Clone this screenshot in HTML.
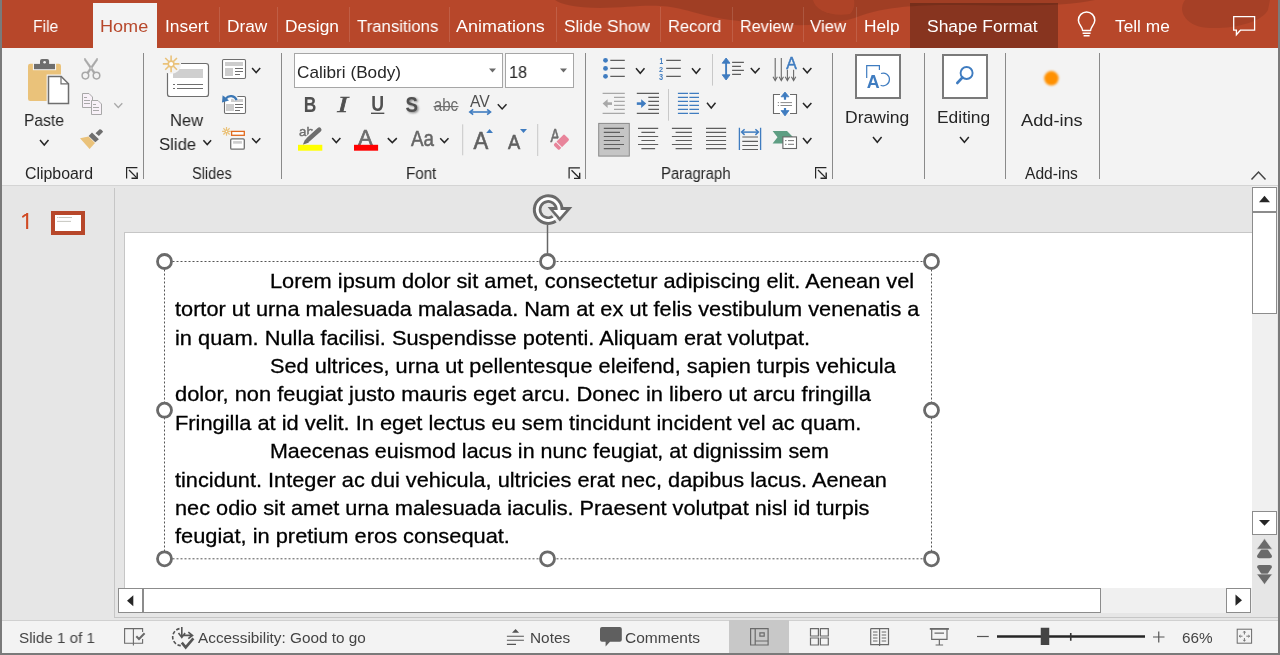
<!DOCTYPE html><html><head><meta charset="utf-8"><style>
html,body{margin:0;padding:0;width:1280px;height:655px;overflow:hidden;background:#e6e6e6}
body{position:relative;font-family:"Liberation Sans",sans-serif}
.t{position:absolute;white-space:nowrap;will-change:transform}
svg{overflow:visible}
</style></head><body>
<div style="position:absolute;left:0px;top:0px;width:1280px;height:48px;background:#b7472a"></div>
<svg style="position:absolute;left:0px;top:0px" width="1280" height="48" viewBox="0 0 1280 48">
<path d="M555 0 C560 4 575 8 600 8 C625 8 640 5 660 6 C680 7 690 12 700 14 C720 20 760 24 790 25 C820 26 845 22 860 16 C880 9 900 6 940 5 C1000 5 1060 8 1095 0 Z" fill="rgba(0,0,0,0.12)"/>
<path d="M813 0 C815 10 830 17 850 14 C856 8 854 0 854 0 Z" fill="rgba(183,71,42,0.6)"/>
<path d="M1185 0 C1176 12 1188 28 1210 28 C1235 29 1262 22 1268 10 L1270 0 Z" fill="rgba(0,0,0,0.09)"/>
</svg>
<div style="position:absolute;left:0px;top:48px;width:1280px;height:137px;background:#f3f3f3"></div>
<div style="position:absolute;left:0px;top:185px;width:1280px;height:1px;background:#d4d4d4"></div>
<div style="position:absolute;left:0px;top:186px;width:1280px;height:434px;background:#e6e6e6"></div>
<div style="position:absolute;left:0px;top:620px;width:1280px;height:35px;background:#f3f3f3;border-top:1px solid #d0d0d0;box-sizing:border-box"></div>
<div style="position:absolute;left:0px;top:0px;width:2px;height:655px;background:#7a7a7a"></div>
<div style="position:absolute;left:1278px;top:0px;width:2px;height:655px;background:#7a7a7a"></div>
<div style="position:absolute;left:0px;top:653px;width:1280px;height:2px;background:#7a7a7a"></div>
<div style="position:absolute;left:93px;top:3px;width:64px;height:45px;background:#f3f3f3"></div>
<div style="position:absolute;left:910px;top:3px;width:148px;height:45px;background:rgba(0,0,0,0.26)"></div>
<div style="position:absolute;left:219px;top:7px;width:1px;height:35px;background:rgba(255,255,255,0.13)"></div>
<div style="position:absolute;left:277px;top:7px;width:1px;height:35px;background:rgba(255,255,255,0.13)"></div>
<div style="position:absolute;left:349px;top:7px;width:1px;height:35px;background:rgba(255,255,255,0.13)"></div>
<div style="position:absolute;left:449px;top:7px;width:1px;height:35px;background:rgba(255,255,255,0.13)"></div>
<div style="position:absolute;left:556px;top:7px;width:1px;height:35px;background:rgba(255,255,255,0.13)"></div>
<div style="position:absolute;left:660px;top:7px;width:1px;height:35px;background:rgba(255,255,255,0.13)"></div>
<div style="position:absolute;left:732px;top:7px;width:1px;height:35px;background:rgba(255,255,255,0.13)"></div>
<div style="position:absolute;left:803px;top:7px;width:1px;height:35px;background:rgba(255,255,255,0.13)"></div>
<div style="position:absolute;left:856px;top:7px;width:1px;height:35px;background:rgba(255,255,255,0.13)"></div>
<div class="t" style="left:32.95px;top:18.06px;font-size:17.30px;line-height:17.30px;color:#ffffff;transform:scaleX(0.9058);transform-origin:0 0;">File</div>
<div class="t" style="left:165.20px;top:18.06px;font-size:17.30px;line-height:17.30px;color:#ffffff;transform:scaleX(1.0058);transform-origin:0 0;">Insert</div>
<div class="t" style="left:226.70px;top:18.06px;font-size:17.30px;line-height:17.30px;color:#ffffff;transform:scaleX(0.9907);transform-origin:0 0;">Draw</div>
<div class="t" style="left:284.70px;top:18.06px;font-size:17.30px;line-height:17.30px;color:#ffffff;transform:scaleX(1.0023);transform-origin:0 0;">Design</div>
<div class="t" style="left:356.70px;top:18.06px;font-size:17.30px;line-height:17.30px;color:#ffffff;transform:scaleX(0.9702);transform-origin:0 0;">Transitions</div>
<div class="t" style="left:456.20px;top:18.06px;font-size:17.30px;line-height:17.30px;color:#ffffff;transform:scaleX(1.0394);transform-origin:0 0;">Animations</div>
<div class="t" style="left:563.70px;top:18.06px;font-size:17.30px;line-height:17.30px;color:#ffffff;transform:scaleX(0.9942);transform-origin:0 0;">Slide Show</div>
<div class="t" style="left:667.95px;top:18.06px;font-size:17.30px;line-height:17.30px;color:#ffffff;transform:scaleX(0.9552);transform-origin:0 0;">Record</div>
<div class="t" style="left:739.70px;top:18.06px;font-size:17.30px;line-height:17.30px;color:#ffffff;transform:scaleX(0.9383);transform-origin:0 0;">Review</div>
<div class="t" style="left:810.45px;top:18.06px;font-size:17.30px;line-height:17.30px;color:#ffffff;transform:scaleX(0.9732);transform-origin:0 0;">View</div>
<div class="t" style="left:863.95px;top:18.06px;font-size:17.30px;line-height:17.30px;color:#ffffff;transform:scaleX(0.9895);transform-origin:0 0;">Help</div>
<div class="t" style="left:927.20px;top:18.06px;font-size:17.30px;line-height:17.30px;color:#ffffff;transform:scaleX(1.0098);transform-origin:0 0;">Shape Format</div>
<div class="t" style="left:1115.20px;top:18.06px;font-size:17.30px;line-height:17.30px;color:#ffffff;">Tell me</div>
<div class="t" style="left:99.95px;top:18.06px;font-size:17.30px;line-height:17.30px;color:#b7472a;transform:scaleX(1.0461);transform-origin:0 0;">Home</div>
<div style="position:absolute;left:143px;top:53px;width:1px;height:126px;background:#8a8a8a"></div>
<div style="position:absolute;left:281px;top:53px;width:1px;height:126px;background:#8a8a8a"></div>
<div style="position:absolute;left:585px;top:53px;width:1px;height:126px;background:#8a8a8a"></div>
<div style="position:absolute;left:832px;top:53px;width:1px;height:126px;background:#8a8a8a"></div>
<div style="position:absolute;left:924px;top:53px;width:1px;height:126px;background:#8a8a8a"></div>
<div style="position:absolute;left:1005px;top:53px;width:1px;height:126px;background:#8a8a8a"></div>
<div style="position:absolute;left:1099px;top:53px;width:1px;height:126px;background:#8a8a8a"></div>
<div class="t" style="left:25.20px;top:166.49px;font-size:15.60px;line-height:15.60px;color:#262626;transform:scaleX(1.0187);transform-origin:0 0;">Clipboard</div>
<div class="t" style="left:191.70px;top:166.49px;font-size:15.60px;line-height:15.60px;color:#262626;transform:scaleX(0.9341);transform-origin:0 0;">Slides</div>
<div class="t" style="left:405.70px;top:166.49px;font-size:15.60px;line-height:15.60px;color:#262626;transform:scaleX(0.9728);transform-origin:0 0;">Font</div>
<div class="t" style="left:660.90px;top:166.49px;font-size:15.60px;line-height:15.60px;color:#262626;transform:scaleX(0.9544);transform-origin:0 0;">Paragraph</div>
<div class="t" style="left:1024.80px;top:166.49px;font-size:15.60px;line-height:15.60px;color:#262626;transform:scaleX(0.9967);transform-origin:0 0;">Add-ins</div>
<div class="t" style="left:24.20px;top:112.11px;font-size:17.00px;line-height:17.00px;color:#262626;transform:scaleX(0.9195);transform-origin:0 0;">Paste</div>
<div class="t" style="left:169.60px;top:112.11px;font-size:17.00px;line-height:17.00px;color:#262626;transform:scaleX(0.9729);transform-origin:0 0;">New</div>
<div class="t" style="left:158.90px;top:136.11px;font-size:17.00px;line-height:17.00px;color:#262626;transform:scaleX(0.9828);transform-origin:0 0;">Slide</div>
<div class="t" style="left:845.00px;top:109.47px;font-size:17.40px;line-height:17.40px;color:#262626;transform:scaleX(1.0082);transform-origin:0 0;">Drawing</div>
<div class="t" style="left:937.20px;top:109.47px;font-size:17.40px;line-height:17.40px;color:#262626;transform:scaleX(0.9934);transform-origin:0 0;">Editing</div>
<div class="t" style="left:1020.70px;top:111.91px;font-size:17.00px;line-height:17.00px;color:#262626;transform:scaleX(1.0707);transform-origin:0 0;">Add-ins</div>
<div style="position:absolute;left:294px;top:53px;width:209px;height:35px;background:#fff;border:1px solid #a6a6a6;box-sizing:border-box"></div>
<div style="position:absolute;left:505px;top:53px;width:69px;height:35px;background:#fff;border:1px solid #a6a6a6;box-sizing:border-box"></div>
<div class="t" style="left:296.50px;top:64.31px;font-size:17.00px;line-height:17.00px;color:#262626;transform:scaleX(1.0097);transform-origin:0 0;">Calibri (Body)</div>
<div class="t" style="left:508.70px;top:64.31px;font-size:17.00px;line-height:17.00px;color:#262626;transform:scaleX(0.9536);transform-origin:0 0;">18</div>
<div style="position:absolute;left:114px;top:188px;width:1px;height:430px;background:#c6c6c6"></div>
<svg style="position:absolute;left:0;top:0" width="60" height="240"><path d="M26.1 213 H28.2 V229 H26.1 Z M21.9 216.2 L26.3 212.9 L27.1 214.7 L22.7 217.9 Z" fill="#d04a24"/></svg>
<div style="position:absolute;left:51px;top:211px;width:34px;height:24px;background:#fff;border:4px solid #b7472a;box-sizing:border-box"></div>
<div style="position:absolute;left:124px;top:232px;width:1128px;height:356px;background:#fff;border-top:1px solid #c6c6c6;border-left:1px solid #c6c6c6;box-sizing:border-box"></div>
<div class="t" style="left:270.20px;top:270.79px;font-size:20.80px;line-height:20.80px;color:#000000;transform:scaleX(1.0475);transform-origin:0 0;-webkit-text-stroke:0.3px #000;">Lorem ipsum dolor sit amet, consectetur adipiscing elit. Aenean vel</div>
<div class="t" style="left:174.80px;top:299.20px;font-size:20.80px;line-height:20.80px;color:#000000;transform:scaleX(1.0454);transform-origin:0 0;-webkit-text-stroke:0.3px #000;">tortor ut urna malesuada malasada. Nam at ex ut felis vestibulum venenatis a</div>
<div class="t" style="left:174.80px;top:327.61px;font-size:20.80px;line-height:20.80px;color:#000000;transform:scaleX(1.0483);transform-origin:0 0;-webkit-text-stroke:0.3px #000;">in quam. Nulla facilisi. Suspendisse potenti. Aliquam erat volutpat.</div>
<div class="t" style="left:270.20px;top:356.02px;font-size:20.80px;line-height:20.80px;color:#000000;transform:scaleX(1.0449);transform-origin:0 0;-webkit-text-stroke:0.3px #000;">Sed ultrices, urna ut pellentesque eleifend, sapien turpis vehicula</div>
<div class="t" style="left:174.80px;top:384.43px;font-size:20.80px;line-height:20.80px;color:#000000;transform:scaleX(1.0525);transform-origin:0 0;-webkit-text-stroke:0.3px #000;">dolor, non feugiat justo mauris eget arcu. Donec in libero ut arcu fringilla</div>
<div class="t" style="left:174.80px;top:412.84px;font-size:20.80px;line-height:20.80px;color:#000000;transform:scaleX(1.0491);transform-origin:0 0;-webkit-text-stroke:0.3px #000;">Fringilla at id velit. In eget lectus eu sem tincidunt incident vel ac quam.</div>
<div class="t" style="left:270.20px;top:441.25px;font-size:20.80px;line-height:20.80px;color:#000000;transform:scaleX(1.0309);transform-origin:0 0;-webkit-text-stroke:0.3px #000;">Maecenas euismod lacus in nunc feugiat, at dignissim sem</div>
<div class="t" style="left:174.80px;top:469.66px;font-size:20.80px;line-height:20.80px;color:#000000;transform:scaleX(1.0454);transform-origin:0 0;-webkit-text-stroke:0.3px #000;">tincidunt. Integer ac dui vehicula, ultricies erat nec, dapibus lacus. Aenean</div>
<div class="t" style="left:174.80px;top:498.07px;font-size:20.80px;line-height:20.80px;color:#000000;transform:scaleX(1.0448);transform-origin:0 0;-webkit-text-stroke:0.3px #000;">nec odio sit amet urna malesuada iaculis. Praesent volutpat nisl id turpis</div>
<div class="t" style="left:174.80px;top:526.48px;font-size:20.80px;line-height:20.80px;color:#000000;transform:scaleX(1.0497);transform-origin:0 0;-webkit-text-stroke:0.3px #000;">feugiat, in pretium eros consequat.</div>
<div style="position:absolute;left:1252px;top:186px;width:25px;height:432px;background:#f0f0f0"></div>
<div style="position:absolute;left:1252px;top:187px;width:25px;height:25px;background:#fff;border:1px solid #8c8c8c;box-sizing:border-box"></div>
<div style="position:absolute;left:1252px;top:212px;width:25px;height:102px;background:#fff;border:1px solid #8c8c8c;box-sizing:border-box"></div>
<div style="position:absolute;left:1252px;top:511px;width:25px;height:24px;background:#fff;border:1px solid #8c8c8c;box-sizing:border-box"></div>
<div style="position:absolute;left:1252px;top:535px;width:26px;height:82px;background:#e6e6e6"></div>
<div style="position:absolute;left:118px;top:588px;width:1134px;height:25px;background:#f0f0f0"></div>
<div style="position:absolute;left:118px;top:588px;width:25px;height:25px;background:#fff;border:1px solid #8c8c8c;box-sizing:border-box"></div>
<div style="position:absolute;left:143px;top:588px;width:958px;height:25px;background:#fff;border:1px solid #8c8c8c;box-sizing:border-box"></div>
<div style="position:absolute;left:1226px;top:588px;width:25px;height:25px;background:#fff;border:1px solid #8c8c8c;box-sizing:border-box"></div>
<div style="position:absolute;left:114px;top:617px;width:1164px;height:1px;background:#c6c6c6"></div>
<div class="t" style="left:18.60px;top:629.65px;font-size:15.30px;line-height:15.30px;color:#444444;transform:scaleX(0.9922);transform-origin:0 0;">Slide 1 of 1</div>
<div class="t" style="left:197.60px;top:629.65px;font-size:15.30px;line-height:15.30px;color:#444444;transform:scaleX(1.0021);transform-origin:0 0;">Accessibility: Good to go</div>
<div class="t" style="left:530.40px;top:629.65px;font-size:15.30px;line-height:15.30px;color:#444444;transform:scaleX(1.0050);transform-origin:0 0;">Notes</div>
<div class="t" style="left:625.20px;top:629.65px;font-size:15.30px;line-height:15.30px;color:#444444;transform:scaleX(1.0135);transform-origin:0 0;">Comments</div>
<div class="t" style="left:1182.45px;top:629.65px;font-size:15.30px;line-height:15.30px;color:#444444;transform:scaleX(0.9959);transform-origin:0 0;">66%</div>
<div style="position:absolute;left:729px;top:620px;width:60px;height:33px;background:#c8c8c8"></div>
<svg style="position:absolute;left:0;top:0" width="1280" height="655" viewBox="0 0 1280 655">
<rect x="28" y="63.7" width="33" height="37.3" rx="2.2" fill="#eac27a"/>
<rect x="32.9" y="62.9" width="23.2" height="7.3" fill="#f3f3f3"/>
<rect x="34" y="63.9" width="21" height="5.3" fill="#6e6e6e"/>
<path d="M40 64.5 v-3.6 a2 2 0 0 1 2 -2 h5.1 a2 2 0 0 1 2 2 v3.6z" fill="#6e6e6e"/>
<circle cx="44.6" cy="62.3" r="1.3" fill="#f3f3f3"/>
<path d="M46.6 74.6 h15 l8.4 8.4 v22 h-23.4z" fill="#f3f3f3"/>
<path d="M48.5 76.5 h12.7 l7.3 7.3 v19.7 h-20z" fill="#fff" stroke="#6e6e6e" stroke-width="1.5"/>
<path d="M61 76.5 v7.3 h7.5" fill="none" stroke="#6e6e6e" stroke-width="1.2"/>
<path d="M40 140 L44.25 145 L48.5 140" fill="none" stroke="#262626" stroke-width="1.5"/>
<g stroke="#a8a8a8" fill="none" stroke-width="1.5">
<circle cx="85.4" cy="75.6" r="3.3"/><circle cx="96.5" cy="75.6" r="3.3"/>
</g>
<path d="M84.8 58 L95 72.2 L93.6 73.4 L84.4 60 Z M97.2 58 L87 72.2 L88.4 73.4 L97.6 60 Z" fill="#a8a8a8" stroke="#a8a8a8" stroke-width="0.6" stroke-linejoin="round"/>

<g fill="#f8f1f8" stroke="#a8a8a8" stroke-width="1">
<path d="M82.5 93.5 h6.5 l3.5 3.5 v10.5 h-10z"/>
<path d="M91.5 100.5 h6.5 l3.5 3.5 v10.5 h-10z"/>
</g>
<g stroke="#a8a8a8" stroke-width="1">
<path d="M84 97.5 h3 M84 100.5 h6 M84 103.5 h6"/>
<path d="M93 104.5 h3 M93 107.5 h6 M93 110.5 h6"/>
</g>
<path d="M114.3 103.3 L118.3 107.5 L122.3 103.3" fill="none" stroke="#a8a8a8" stroke-width="1.3"/>
<path d="M95.5 133.2 L99.6 129.3 Q101.5 128.6 103.1 131.8 L98.9 136.1 Z" fill="#6e6e6e"/>
<path d="M88.6 135.9 L92 132.5 L98.9 139.3 L95.3 142.3 Z" fill="#6e6e6e"/>
<path d="M80 138.3 L88.5 136.6 L95 143 L89.6 149.1 Z" fill="#eac27a"/>

<rect x="167.5" y="63.5" width="41" height="33" rx="2.6" fill="#fff" stroke="#6e6e6e" stroke-width="1.2"/>
<rect x="173" y="69" width="30" height="9" fill="#cfcfcf"/>
<path d="M173 84.5 h2 M177 84.5 H203 M173 88.5 h2 M177 88.5 H203" stroke="#6e6e6e" stroke-width="1"/>
<circle cx="171.1" cy="63.9" r="10" fill="#f3f3f3"/>
<path d="M174.10 63.90 L179.40 63.90 M173.22 66.02 L176.97 69.77 M171.10 66.90 L171.10 72.20 M168.98 66.02 L165.23 69.77 M168.10 63.90 L162.80 63.90 M168.98 61.78 L165.23 58.03 M171.10 60.90 L171.10 55.60 M173.22 61.78 L176.97 58.03 " stroke="#eac27a" stroke-width="1.6" fill="none"/><circle cx="171.1" cy="63.9" r="2.8" fill="#fff" stroke="#eac27a" stroke-width="1.6"/>
<path d="M203.4 140.2 L207.25 144.6 L211.1 140.2" fill="none" stroke="#262626" stroke-width="1.5"/>
<rect x="222.5" y="59.5" width="23" height="19" rx="1.2" fill="#fff" stroke="#6e6e6e" stroke-width="1.1"/>
<rect x="225" y="62" width="18" height="4" fill="#cdcdcd"/>
<rect x="225" y="68" width="8" height="8" fill="#cdcdcd"/>
<path d="M235 68.5 h8 M235 71.5 h8 M235 74.5 h5" stroke="#6e6e6e" stroke-width="1"/>
<path d="M252.1 68.1 L256.15 72.6 L260.2 68.1" fill="none" stroke="#262626" stroke-width="1.5"/>
<rect x="224.5" y="96.5" width="21" height="17" rx="1.2" fill="#fff" stroke="#6e6e6e" stroke-width="1.1"/>
<rect x="231" y="99" width="12" height="3" fill="#cdcdcd"/>
<rect x="226" y="104" width="8" height="7" fill="#cdcdcd"/>
<path d="M235 104.5 h8 M235 107.5 h8 M235 110.5 h5" stroke="#6e6e6e" stroke-width="1"/>
<path d="M236.8 100 A6.3 6.3 0 0 0 225.8 98.6" fill="none" stroke="#f3f3f3" stroke-width="4.8"/>
<path d="M236.6 100.2 A6.2 6.2 0 0 0 225.8 98.6" fill="none" stroke="#3c78b5" stroke-width="2.3"/>
<path d="M222 102.6 L222.6 95.2 L229 100.6 Z" fill="#3c78b5"/>

<rect x="231.6" y="131.4" width="12.7" height="3.9" fill="#fff" stroke="#e0691f" stroke-width="1.3"/>
<rect x="230.7" y="138.8" width="13.6" height="10.4" rx="1.2" fill="#fff" stroke="#707070" stroke-width="1.3"/>
<rect x="233.1" y="141.1" width="8.8" height="2.6" fill="#cdcdcd"/>
<path d="M228.00 131.40 L230.90 131.40 M227.56 132.46 L229.61 134.51 M226.50 132.90 L226.50 135.80 M225.44 132.46 L223.39 134.51 M225.00 131.40 L222.10 131.40 M225.44 130.34 L223.39 128.29 M226.50 129.90 L226.50 127.00 M227.56 130.34 L229.61 128.29 " stroke="#eac27a" stroke-width="1.2" fill="none"/><circle cx="226.5" cy="131.4" r="1.3" fill="#fff" stroke="#eac27a" stroke-width="1.2"/>
<path d="M252.1 138.2 L256.2 142.6 L260.3 138.2" fill="none" stroke="#262626" stroke-width="1.5"/><path d="M489 68.6 L496 68.6 L492.5 72.6 Z" fill="#6a6a6a"/><path d="M560 68.6 L567 68.6 L563.5 72.6 Z" fill="#6a6a6a"/><text transform="translate(303.70 111.80) scale(0.769 1)" font-family="Liberation Sans" font-weight="bold" font-style="normal" font-size="22.69" fill="#505050" >B</text><text transform="translate(337.36 111.80) scale(1.357 1)" font-family="Liberation Serif" font-weight="normal" font-style="italic" font-size="23.82" fill="#505050" stroke="#505050" stroke-width="0.6">I</text><text transform="translate(371.20 110.79) scale(0.835 1)" font-family="Liberation Sans" font-weight="bold" font-style="normal" font-size="21.22" fill="#505050" >U</text><rect x="371" y="112.6" width="13.3" height="1.4" fill="#505050"/><filter id="sh" x="-50%" y="-50%" width="200%" height="200%"><feGaussianBlur stdDeviation="0.9"/></filter><g transform="translate(1.3 1.3)" filter="url(#sh)" opacity="0.7"><text transform="translate(405.50 111.58) scale(0.844 1)" font-family="Liberation Sans" font-weight="bold" font-style="normal" font-size="22.01" fill="#505050" >S</text></g><text transform="translate(405.50 111.58) scale(0.844 1)" font-family="Liberation Sans" font-weight="bold" font-style="normal" font-size="22.01" fill="#505050" >S</text><text transform="translate(433.80 111.42) scale(0.839 1)" font-family="Liberation Sans" font-weight="normal" font-style="normal" font-size="17.96" fill="#6e6e6e" >abc</text><rect x="433.5" y="106" width="25" height="1.2" fill="#6e6e6e"/><text transform="translate(470.00 106.90) scale(0.912 1)" font-family="Liberation Sans" font-weight="normal" font-style="normal" font-size="17.31" fill="#505050" >AV</text><path d="M470.5 112 H489.8" stroke="#3f7cc0" stroke-width="1.6"/><path d="M473.2 109.4 L469.8 112 L473.2 114.6 M487.1 109.4 L490.5 112 L487.1 114.6" fill="none" stroke="#3f7cc0" stroke-width="1.6"/><path d="M497.8 104.2 L502.15 108.9 L506.5 104.2" fill="none" stroke="#262626" stroke-width="1.5"/><text transform="translate(299.00 136.47) scale(1.063 1)" font-family="Liberation Sans" font-weight="normal" font-style="normal" font-size="12.52" fill="#6e6e6e" stroke="#6e6e6e" stroke-width="0.4">ab</text><path d="M306 141.5 L318.6 130" stroke="#f3f3f3" stroke-width="7.5" stroke-linecap="round"/><path d="M308.2 139.6 L319.2 129.8" stroke="#6e6e6e" stroke-width="4.6" stroke-linecap="round"/><path d="M302.8 144.8 L305.2 139.2 L309 142.6 Z" fill="#6e6e6e"/><rect x="298" y="144.8" width="24.3" height="5.9" fill="#ffff00"/><path d="M332.2 138.1 L336.29999999999995 142.6 L340.4 138.1" fill="none" stroke="#262626" stroke-width="1.5"/><text transform="translate(358.30 144.80) scale(0.950 1)" font-family="Liberation Sans" font-weight="normal" font-style="normal" font-size="22.55" fill="#6e6e6e" stroke="#6e6e6e" stroke-width="0.7">A</text><rect x="354" y="144.8" width="24.1" height="5.9" fill="#ff0000"/><path d="M387.8 138.1 L392.3 142.6 L396.8 138.1" fill="none" stroke="#262626" stroke-width="1.5"/><text transform="translate(411.00 145.69) scale(0.880 1)" font-family="Liberation Sans" font-weight="normal" font-style="normal" font-size="21.36" fill="#666" stroke="#666" stroke-width="0.5">Aa</text><path d="M440.2 138.2 L444.35 142.6 L448.5 138.2" fill="none" stroke="#262626" stroke-width="1.5"/><rect x="462.2" y="124.3" width="1" height="31" fill="#c8c8c8"/><rect x="537.2" y="124" width="1" height="32" fill="#c8c8c8"/><text transform="translate(473.60 149.10) scale(0.918 1)" font-family="Liberation Sans" font-weight="normal" font-style="normal" font-size="24.15" fill="#606060" stroke="#606060" stroke-width="0.6">A</text><path d="M486.2 132.9 L493 132.9 L489.6 129 Z" fill="#3f7cc0"/><text transform="translate(508.10 149.00) scale(0.898 1)" font-family="Liberation Sans" font-weight="normal" font-style="normal" font-size="20.36" fill="#606060" stroke="#606060" stroke-width="0.6">A</text><path d="M520 128.9 L527 128.9 L523.5 133.1 Z" fill="#3f7cc0"/><text transform="translate(550.50 141.90) scale(0.760 1)" font-family="Liberation Sans" font-weight="normal" font-style="normal" font-size="18.33" fill="#6e6e6e" stroke="#6e6e6e" stroke-width="0.6">A</text><g transform="translate(561.4 142.2) rotate(-45)"><rect x="-8.6" y="-5" width="17.2" height="10" rx="2" fill="#f3f3f3"/><rect x="-7.6" y="-3.9" width="15.2" height="7.8" rx="1.5" fill="#e8849a"/><rect x="-4" y="-4.5" width="1" height="9" fill="#f3f3f3"/></g><path d="M126.6 178.4 V167.6 H137.4" fill="none" stroke="#262626" stroke-width="1.2"/><path d="M129 170 L136.6 177.6" stroke="#262626" stroke-width="1.3"/><path d="M131.5 178.2 H137.2 V172.5" fill="none" stroke="#262626" stroke-width="1.4"/><path d="M569.1 178.6 V167.79999999999998 H579.9" fill="none" stroke="#262626" stroke-width="1.2"/><path d="M571.5 170.2 L579.1 177.79999999999998" stroke="#262626" stroke-width="1.3"/><path d="M574.0 178.39999999999998 H579.7 V172.7" fill="none" stroke="#262626" stroke-width="1.4"/><path d="M815.6 178.4 V167.6 H826.4" fill="none" stroke="#262626" stroke-width="1.2"/><path d="M818 170 L825.6 177.6" stroke="#262626" stroke-width="1.3"/><path d="M820.5 178.2 H826.2 V172.5" fill="none" stroke="#262626" stroke-width="1.4"/><g fill="#3f7cc0"><circle cx="605.5" cy="60.3" r="2.4"/><circle cx="605.5" cy="68.4" r="2.4"/><circle cx="605.5" cy="76.3" r="2.4"/></g><path d="M610.3 60.3 H624.8 M610.3 68.4 H624.8 M610.3 76.3 H624.8" stroke="#5e5e5e" stroke-width="1.15"/><path d="M636 68.2 L640.25 73.3 L644.5 68.2" fill="none" stroke="#262626" stroke-width="1.5"/><text transform="translate(659.40 63.80) scale(0.742 1)" font-family="Liberation Sans" font-weight="bold" font-style="normal" font-size="8.73" fill="#3f7cc0" >1</text><text transform="translate(659.10 71.80) scale(0.920 1)" font-family="Liberation Sans" font-weight="bold" font-style="normal" font-size="8.01" fill="#3f7cc0" >2</text><text transform="translate(659.10 79.81) scale(0.902 1)" font-family="Liberation Sans" font-weight="bold" font-style="normal" font-size="8.17" fill="#3f7cc0" >3</text><path d="M666.2 60.3 H680.8 M666.2 68.4 H680.8 M666.2 76.3 H680.8" stroke="#5e5e5e" stroke-width="1.15"/><path d="M692 68.2 L696.2 73.3 L700.4 68.2" fill="none" stroke="#262626" stroke-width="1.5"/><rect x="712" y="54" width="1" height="31.6" fill="#c8c8c8"/><rect x="668" y="89" width="1" height="31.7" fill="#c8c8c8"/><path d="M602.6 93.3 H624.8 M614 97.3 H624.8 M614 101.3 H624.8 M614 105.3 H624.8 M614 109.3 H624.8 M602.6 113.4 H624.8" stroke="#a8a8a8" stroke-width="1.3"/><path d="M612 103.6 H605.5" stroke="#a8a8a8" stroke-width="2.6"/><path d="M607.6 99.3 L602.6 103.6 L607.6 107.9 Z" fill="#a8a8a8"/><path d="M636.8 93.3 H659 M648.3 97.3 H659 M648.3 101.3 H659 M648.3 105.3 H659 M648.3 109.3 H659 M636.8 113.4 H659" stroke="#5e5e5e" stroke-width="1.15"/><path d="M636.8 103.6 H643" stroke="#3f7cc0" stroke-width="2.6"/><path d="M641.2 99.3 L646.2 103.6 L641.2 107.9 Z" fill="#3f7cc0"/><path d="M677.9 93.3 H688 M689.4 93.3 H699 M677.9 97.3 H688 M689.4 97.3 H699 M677.9 101.3 H688 M689.4 101.3 H699 M677.9 105.3 H688 M689.4 105.3 H699 M677.9 109.3 H688 M689.4 109.3 H699 M677.9 113.4 H688 M689.4 113.4 H699" stroke="#3f7cc0" stroke-width="1.3"/><path d="M707 102.7 L711.25 108 L715.5 102.7" fill="none" stroke="#262626" stroke-width="1.5"/><rect x="598.7" y="123.4" width="30.6" height="32.7" fill="#c5c5c5" stroke="#8a8a8a" stroke-width="1"/><path d="M603.8 128.4 H624 M603.8 132.4 H620 M603.8 136.5 H624 M603.8 140.5 H620 M603.8 144.5 H624 M603.8 148.6 H620" stroke="#5e5e5e" stroke-width="1.15"/><path d="M638 128.4 H658.2 M641.4 132.4 H655.1 M638 136.5 H658.2 M641.4 140.5 H655.1 M638 144.5 H658.2 M641.4 148.6 H655.1" stroke="#5e5e5e" stroke-width="1.15"/><path d="M671.9 128.4 H691.9 M675.6 132.4 H691.9 M671.9 136.5 H691.9 M675.6 140.5 H691.9 M671.9 144.5 H691.9 M675.6 148.6 H691.9" stroke="#5e5e5e" stroke-width="1.15"/><path d="M706 128.4 H726.1 M706 132.4 H726.1 M706 136.5 H726.1 M706 140.5 H726.1 M706 144.5 H726.1 M706 148.6 H726.1" stroke="#5e5e5e" stroke-width="1.15"/><path d="M739.4 127.8 V150 M760.6 127.8 V150" stroke="#3f7cc0" stroke-width="1.3"/><path d="M742 132.1 H758" stroke="#3f7cc0" stroke-width="1.5"/><path d="M744.6 129.3 L741.6 132.1 L744.6 134.9 M755.4 129.3 L758.4 132.1 L755.4 134.9" fill="none" stroke="#3f7cc0" stroke-width="1.5"/><path d="M742.3 137 H758 M742.3 141.3 H758 M742.3 145.5 H758 M742.3 149.5 H758" stroke="#5e5e5e" stroke-width="1.15"/><path d="M772.6 131 H787 L793.2 137.2 L787 143.4 H772.6 L777.5 137.2 Z" fill="#5e9e83"/><rect x="782.9" y="136.9" width="13.6" height="11.6" fill="#fff" stroke="#666" stroke-width="1.1"/><path d="M785 140.6 h1.5 M788 140.6 h6 M785 144.3 h1.5 M788 144.3 h6" stroke="#777" stroke-width="1"/><path d="M803 138 L807.2 143 L811.4 138" fill="none" stroke="#262626" stroke-width="1.5"/><path d="M726.1 61.5 V76.5" stroke="#3f7cc0" stroke-width="1.9"/><path d="M722.2 63.2 L726.1 58 L730 63.2 Z M722.2 74.8 L726.1 80 L730 74.8 Z" fill="#3f7cc0" stroke="#3f7cc0" stroke-width="0.9" stroke-linejoin="round"/><path d="M732.1 62.4 H743.9 M732.1 66.3 H741 M732.1 70.4 H743.9 M732.1 74.3 H741" stroke="#5e5e5e" stroke-width="1.15"/><path d="M750.8 68.1 L755.2 72.8 L759.6 68.1" fill="none" stroke="#262626" stroke-width="1.5"/><path d="M775.2 58 V80 M781.3 58 V80 M787.4 69.7 V80 M793.6 69.7 V80" stroke="#6a6a6a" stroke-width="1.1"/><path d="M773 76.8 L775.2 80.6 L777.4 76.8 M779.1 76.8 L781.3 80.6 L783.5 76.8 M785.2 76.8 L787.4 80.6 L789.6 76.8 M791.4 76.8 L793.6 80.6 L795.8 76.8" fill="none" stroke="#6a6a6a" stroke-width="1.1"/><text transform="translate(786.20 68.80) scale(0.949 1)" font-family="Liberation Sans" font-weight="normal" font-style="normal" font-size="16.73" fill="#3f7cc0" stroke="#3f7cc0" stroke-width="0.5">A</text><path d="M803 68.1 L807.2 72.8 L811.4 68.1" fill="none" stroke="#262626" stroke-width="1.5"/><rect x="773.5" y="94.5" width="23" height="19" fill="#fff"/><path d="M780 94.5 H773.5 V113.5 H780 M790 94.5 H796.5 V113.5 H790" fill="none" stroke="#6a6a6a" stroke-width="1.1"/><path d="M785 95 V99.8 M785 108 V112.5" stroke="#3f7cc0" stroke-width="2.2"/><path d="M781 96.8 L785 92 L789 96.8 Z M781 110.6 L785 115.9 L789 110.6 Z" fill="#3f7cc0" stroke="#3f7cc0" stroke-width="0.8" stroke-linejoin="round"/><path d="M777.8 102.6 h1.2 M780.5 102.6 H792 M777.8 105.5 h1.2 M780.5 105.5 H792" stroke="#8a8a8a" stroke-width="1"/><path d="M803 102.9 L807.2 107.6 L811.4 102.9" fill="none" stroke="#262626" stroke-width="1.5"/><rect x="856" y="55" width="44" height="43" fill="#fff" stroke="#7a7a7a" stroke-width="2"/><rect x="943" y="55" width="44" height="43" fill="#fff" stroke="#7a7a7a" stroke-width="2"/><path d="M866.7 78 V65.7 H879.4 V70" fill="none" stroke="#3f7cc0" stroke-width="1.2"/><path d="M881 73.5 A6.3 6.3 0 1 1 880.6 85.2" fill="none" stroke="#3f7cc0" stroke-width="1.2"/><text transform="translate(866.80 88.00) scale(0.952 1)" font-family="Liberation Sans" font-weight="bold" font-style="normal" font-size="18.76" fill="#3f7cc0" >A</text><circle cx="966.6" cy="73" r="6" fill="none" stroke="#3f7cc0" stroke-width="1.9"/><path d="M962.3 77.6 L957.4 82.9" stroke="#3f7cc0" stroke-width="2.8" stroke-linecap="round"/><path d="M873 137 L877.3 142.3 L881.6 137" fill="none" stroke="#262626" stroke-width="1.5"/><path d="M960 137 L964.4 142.3 L968.8 137" fill="none" stroke="#262626" stroke-width="1.5"/><filter id="bl" x="-50%" y="-50%" width="200%" height="200%"><feGaussianBlur stdDeviation="0.9"/></filter><circle cx="1051.4" cy="78.3" r="7.2" fill="#ff9000" filter="url(#bl)"/><path d="M1251.5 179.5 L1258.5 172 L1265.5 179.5" fill="none" stroke="#444" stroke-width="1.5"/><path d="M1082.6 30.6 C1082.6 27 1078.4 24.6 1078.4 20.2 A8.2 8.2 0 0 1 1094.8 20.2 C1094.8 24.6 1090.6 27 1090.6 30.6 Z" fill="none" stroke="#ffffff" stroke-width="1.5" stroke-linejoin="round"/><path d="M1082.6 33.2 H1090.6 M1083.6 35.8 H1089.6" stroke="#ffffff" stroke-width="1.5"/><path d="M1233.7 16.6 H1254.6 V30.2 H1240.4 L1236.4 34.8 V30.2 H1233.7 Z" fill="none" stroke="#ffffff" stroke-width="1.3"/><g stroke="#555" stroke-width="1" stroke-dasharray="2 2" fill="none"><path d="M164.5 261.5 H931.5 M164.5 558.8 H931.5 M164.5 261.5 V558.8 M931.5 261.5 V558.8"/></g><path d="M547.5 225 V253" stroke="#666" stroke-width="1.5"/><path d="M563.58 210.41 A15.4 15.4 0 1 0 556.59 222.52 L551.90 215.30 A6.8 6.8 0 1 1 554.99 209.96 Z" fill="#6a6a6a"/><path d="M547.6 207.1 L572.4 207.1 L559.8 221.6 Z" fill="#6a6a6a"/><path d="M560.33 212.18 A12.4 12.4 0 1 0 557.12 218.21 L555.03 216.20 A9.5 9.5 0 1 1 557.49 211.58 Z" fill="#fff"/><path d="M553.4 209.9 L566.2 209.9 L559.8 217.2 Z" fill="#fff"/><circle cx="164.5" cy="261.5" r="7" fill="#fff" stroke="#6a6a6a" stroke-width="2.8"/><circle cx="164.5" cy="410.2" r="7" fill="#fff" stroke="#6a6a6a" stroke-width="2.8"/><circle cx="164.5" cy="558.8" r="7" fill="#fff" stroke="#6a6a6a" stroke-width="2.8"/><circle cx="547.5" cy="261.5" r="7" fill="#fff" stroke="#6a6a6a" stroke-width="2.8"/><circle cx="547.5" cy="558.8" r="7" fill="#fff" stroke="#6a6a6a" stroke-width="2.8"/><circle cx="931.5" cy="261.5" r="7" fill="#fff" stroke="#6a6a6a" stroke-width="2.8"/><circle cx="931.5" cy="410.2" r="7" fill="#fff" stroke="#6a6a6a" stroke-width="2.8"/><circle cx="931.5" cy="558.8" r="7" fill="#fff" stroke="#6a6a6a" stroke-width="2.8"/><path d="M57 217.5 h1 M58.5 217.5 h13.5 M57 221.4 h14" stroke="#c0c0b8" stroke-width="0.9"/><path d="M1259 202.2 H1270 L1264.5 195.8 Z" fill="#262626"/><path d="M1259 520 H1270 L1264.5 525.8 Z" fill="#262626"/><path d="M133.3 595.3 V606.3 L127 600.8 Z" fill="#262626"/><path d="M1235.5 594.6 V605.7 L1242 600.15 Z" fill="#262626"/><path d="M1257.2 555.6 L1264.5 544.5 L1271.8 555.6 Q1272.4 558.2 1269.6 558.2 H1259.4 Q1256.6 558.2 1257.2 555.6 Z" fill="#6a6a6a"/><path d="M1264.5 538.6 L1272.4 549.2 H1256.6 Z" fill="#6a6a6a" stroke="#e6e6e6" stroke-width="0.7"/><path d="M1257.2 567.6 L1264.5 578.7 L1271.8 567.6 Q1272.4 565 1269.6 565 H1259.4 Q1256.6 565 1257.2 567.6 Z" fill="#6a6a6a"/><path d="M1264.5 584.6 L1272.4 574 H1256.6 Z" fill="#6a6a6a" stroke="#e6e6e6" stroke-width="0.7"/><path d="M124.6 628.6 H133.4 V643.3 H124.6 Z M133.4 628.6 H142.6 V632 M142.6 639 V643.3 H133.4 M133.4 643.3 V645.5" fill="none" stroke="#6a6a6a" stroke-width="1.1"/><path d="M136.3 636.2 L139 639 L144.6 633.2" fill="none" stroke="#6a6a6a" stroke-width="2"/><path d="M179.5 628.6 A8.6 8.6 0 0 0 180.8 645.6" fill="none" stroke="#555" stroke-width="1.6" stroke-dasharray="3.5 1.8"/><path d="M181.8 627 V636 M178.5 633 L181.8 637.5 L185.1 633 M183 635.4 H191 M188.3 632.2 L192.5 635.4 L188.3 638.6" fill="none" stroke="#555" stroke-width="1.6"/><path d="M181.8 642.6 L185.7 647.4 L193.4 638.4" fill="none" stroke="#555" stroke-width="2.6"/><path d="M512 632.7 H519.1 L515.55 628.9 Z" fill="#555"/><path d="M506.9 636.2 H523.9 M506.9 640.3 H523.9 M506.9 644.4 H516" stroke="#555" stroke-width="1.1"/><path d="M602 627.1 H619.8 Q621.8 627.1 621.8 629.1 V639.8 Q621.8 641.8 619.8 641.8 H610 L605.6 646.6 V641.8 H602 Q600 641.8 600 639.8 V629.1 Q600 627.1 602 627.1 Z" fill="#5f5f5f"/><path d="M750.6 628.6 H768.1 V645 H750.6 Z M755.2 628.6 V645 M755.2 641 H768.1 M759.9 632.9 H764.2 V636.2 H759.9 Z" fill="none" stroke="#6a6a6a" stroke-width="1.2"/><path d="M810.5 628.6 H818.4 V636 H810.5 Z M820.4 628.6 H828.3 V636 H820.4 Z M810.5 638 H818.4 V645 H810.5 Z M820.4 638 H828.3 V645 H820.4 Z" fill="none" stroke="#6a6a6a" stroke-width="1.2"/><path d="M870.7 628.6 H879.6 M879.6 628.6 H888.5 V644.6 H870.7 V628.6 M879.6 628.6 V646" fill="none" stroke="#6a6a6a" stroke-width="1.2"/><path d="M873 632 H877.5 M873 635 H877.5 M873 638 H877.5 M873 641 H877.5 M881.7 632 H886.2 M881.7 635 H886.2 M881.7 638 H886.2 M881.7 641 H886.2" stroke="#6a6a6a" stroke-width="1"/><path d="M929.8 628.9 H948.9" stroke="#6a6a6a" stroke-width="1.8"/><path d="M931.7 629 V639.4 H947 V629 M939.35 639.4 V645 M935.6 645 H943.1 M934.5 633.2 H944" fill="none" stroke="#6a6a6a" stroke-width="1.2"/><path d="M977 636.5 H988.75" stroke="#555" stroke-width="1.2"/><path d="M997 636.5 H1145" stroke="#262626" stroke-width="2.3"/><rect x="1040.75" y="627.75" width="8.5" height="17.25" fill="#444"/><path d="M1070.75 633 V640.75" stroke="#333" stroke-width="1.6"/><path d="M1153 637 H1164.5 M1158.75 631.5 V642.5" stroke="#555" stroke-width="1.2"/><rect x="1237.2" y="629.2" width="14.4" height="14" fill="none" stroke="#6a6a6a" stroke-width="1"/><path d="M1244.4 631.5 V634.5 M1244.4 638 V641 M1239.5 636.2 H1242.5 M1246.3 636.2 H1249.3" stroke="#6a6a6a" stroke-width="0.9"/><path d="M1243.2 632.6 L1244.4 631 L1245.6 632.6 M1243.2 639.8 L1244.4 641.4 L1245.6 639.8 M1240.6 635 L1239 636.2 L1240.6 637.4 M1248.2 635 L1249.8 636.2 L1248.2 637.4" fill="none" stroke="#6a6a6a" stroke-width="0.8"/></svg>
</body></html>
